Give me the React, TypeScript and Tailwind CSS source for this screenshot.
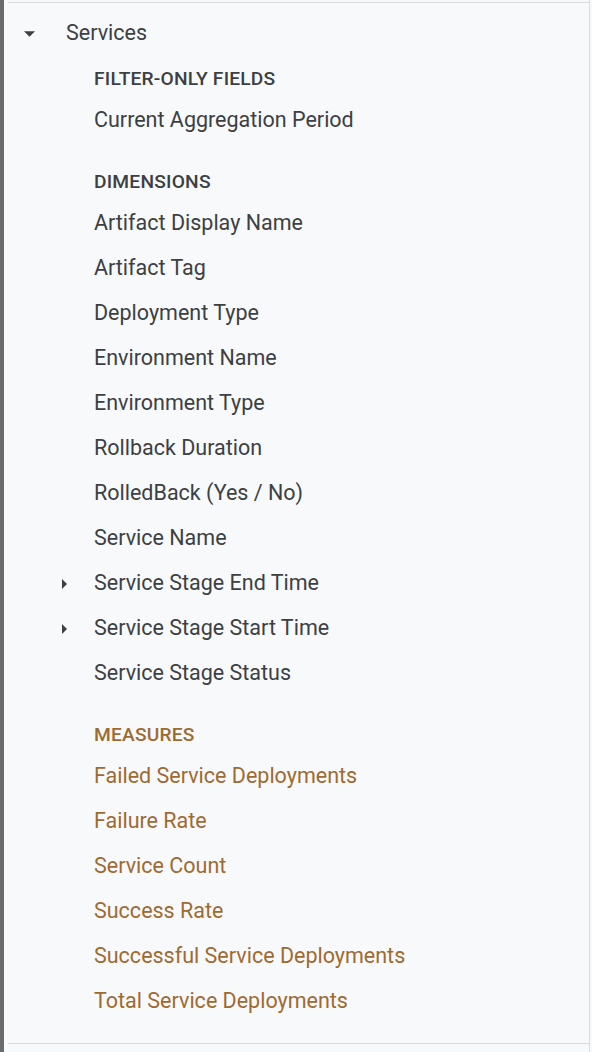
import React from "react";

type Section = {
  title: string;
  tone: "dim" | "measure";
  items: { label: string; expandable?: boolean }[];
};

const sections: Section[] = [
  {
    title: "FILTER-ONLY FIELDS",
    tone: "dim",
    items: [{ label: "Current Aggregation Period" }],
  },
  {
    title: "DIMENSIONS",
    tone: "dim",
    items: [
      { label: "Artifact Display Name" },
      { label: "Artifact Tag" },
      { label: "Deployment Type" },
      { label: "Environment Name" },
      { label: "Environment Type" },
      { label: "Rollback Duration" },
      { label: "RolledBack (Yes / No)" },
      { label: "Service Name" },
      { label: "Service Stage End Time", expandable: true },
      { label: "Service Stage Start Time", expandable: true },
      { label: "Service Stage Status" },
    ],
  },
  {
    title: "MEASURES",
    tone: "measure",
    items: [
      { label: "Failed Service Deployments" },
      { label: "Failure Rate" },
      { label: "Service Count" },
      { label: "Success Rate" },
      { label: "Successful Service Deployments" },
      { label: "Total Service Deployments" },
    ],
  },
];

function CaretDown() {
  return (
    <svg width="11" height="6" viewBox="0 0 10 5" className="fill-[#3c4043]">
      <path d="M0 0L5 5L10 0Z" />
    </svg>
  );
}

function CaretRight() {
  return (
    <svg width="5" height="10" viewBox="0 0 5 10" className="fill-[#3c4043]">
      <path d="M0 0L5 5L0 10Z" />
    </svg>
  );
}

export default function App() {
  return (
    <div
      className="flex h-[1052px] w-[592px] bg-[#f8f9fa]"
      style={{ fontFamily: "Roboto, 'Liberation Sans', sans-serif" }}
    >
      <div className="w-[4px] shrink-0 bg-[#6b6b6b]" />
      <div className="flex-1 pl-[4px]">
        <div className="mt-[2px] border-t border-[#d9dbde] pt-[3px]">
          <div className="flex h-[53px] items-center pt-[2px]">
            <div className="w-[58px] pl-[16px]">
              <CaretDown />
            </div>
            <span className="text-[21.5px] text-[#3c4043]">Services</span>
          </div>

          {sections.map((s, i) => (
            <div key={s.title} className={i > 0 ? "mt-[19px]" : ""}>
              <div
                className={`flex h-[39px] items-center pl-[86px] pt-[2px] text-[19.2px] font-medium tracking-[0.2px] ${
                  s.tone === "measure" ? "text-[#9f6a31]" : "text-[#3c4043]"
                }`}
              >
                {s.title}
              </div>
              {s.items.map((it) => (
                <div key={it.label} className="flex h-[45px] items-center">
                  <div className="w-[86px] pl-[54px]">
                    {it.expandable ? <CaretRight /> : null}
                  </div>
                  <span
                    className={`text-[21.5px] ${
                      s.tone === "measure" ? "text-[#9f6a31]" : "text-[#3c4043]"
                    }`}
                  >
                    {it.label}
                  </span>
                </div>
              ))}
            </div>
          ))}

          <div className="mt-[19px] border-t border-[#d9dbde]" />
        </div>
      </div>
      <div className="w-px shrink-0 bg-[#dadce0]" />
      <div className="w-[2px] shrink-0" />
    </div>
  );
}
